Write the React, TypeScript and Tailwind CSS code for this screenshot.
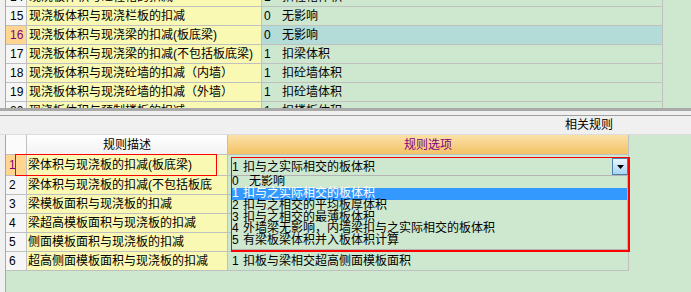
const FONT = "font-['Liberation_Sans','Noto_Sans_CJK_SC',sans-serif]";
const LINE = 'border-[#c0c0c0]';

type TopRow = { no: number; desc: string; val: string; opt: string; selected?: boolean };

const topRows: TopRow[] = [
  { no: 14, desc: '现浇板体积与砼柱帽的扣减', val: '1', opt: '扣柱帽体积' },
  { no: 15, desc: '现浇板体积与现浇栏板的扣减', val: '0', opt: '无影响' },
  { no: 16, desc: '现浇板体积与现浇梁的扣减(板底梁)', val: '0', opt: '无影响', selected: true },
  { no: 17, desc: '现浇板体积与现浇梁的扣减(不包括板底梁)', val: '1', opt: '扣梁体积' },
  { no: 18, desc: '现浇板体积与现浇砼墙的扣减（内墙）', val: '1', opt: '扣砼墙体积' },
  { no: 19, desc: '现浇板体积与现浇砼墙的扣减（外墙）', val: '1', opt: '扣砼墙体积' },
  { no: 20, desc: '现浇板体积与预制楼板的扣减', val: '1', opt: '扣楼板体积' },
];

type BottomRow = { no: number; desc: string; val?: string; opt?: string };

const bottomRows: BottomRow[] = [
  { no: 2, desc: '梁体积与现浇板的扣减(不包括板底' },
  { no: 3, desc: '梁模板面积与现浇板的扣减' },
  { no: 4, desc: '梁超高模板面积与现浇板的扣减' },
  { no: 5, desc: '侧面模板面积与现浇板的扣减' },
  { no: 6, desc: '超高侧面模板面积与现浇板的扣减', val: '1', opt: '扣板与梁相交超高侧面模板面积' },
];

// 下拉列表的选项
const options = [
  { val: '0', label: '无影响' },
  { val: '1', label: '扣与之实际相交的板体积' },
  { val: '2', label: '扣与之相交的平均板厚体积' },
  { val: '3', label: '扣与之相交的最薄板体积' },
  { val: '4', label: '外墙梁无影响，内墙梁扣与之实际相交的板体积' },
  { val: '5', label: '有梁板梁体积并入板体积计算' },
];

function Strip() {
  return <div className="w-[6px] shrink-0 bg-[#f0f0f0] border-r border-[#a8a8a8]" />;
}

function TopGridRow({ row, first }: { row: TopRow; first?: boolean }) {
  return (
    <div className={`flex h-[19px] shrink-0 ${first ? 'mt-[-12px]' : ''}`}>
      <Strip />
      <div
        className={`w-[21px] shrink-0 flex items-center pl-[4px] border-r border-b ${LINE} ${
          row.selected ? 'bg-[#ffd590] text-[#800080]' : 'bg-[#f6f6f6]'
        }`}
      >
        {row.no}
      </div>
      <div className={`w-[235px] shrink-0 flex items-center pl-[2px] whitespace-nowrap overflow-hidden border-r border-b ${LINE} bg-[#f9f9b4]`}>
        {row.desc}
      </div>
      <div
        className={`w-[401px] shrink-0 flex items-center pl-[2px] whitespace-nowrap border-r border-b ${LINE} ${
          row.selected ? 'bg-[#b3dcd8]' : 'bg-[#cde8cf]'
        }`}
      >
        <span className="w-[18px] shrink-0">{row.val}</span>
        {row.opt}
      </div>
      <div className="flex-1" />
    </div>
  );
}

function BottomGridRow({ row }: { row: BottomRow }) {
  return (
    <div className="flex h-[19px] shrink-0">
      <Strip />
      <div className={`w-[21px] shrink-0 flex items-center pl-[3px] border-r border-b ${LINE} bg-[#f6f6f6]`}>
        {row.no}
      </div>
      <div className={`w-[201px] shrink-0 flex items-center pl-[1px] whitespace-nowrap overflow-hidden border-r border-b ${LINE} bg-[#f9f9b4]`}>
        {row.desc}
      </div>
      <div className={`w-[401px] shrink-0 flex items-center pl-[4px] whitespace-nowrap border-r border-b ${LINE} bg-[#cde8cf]`}>
        {row.val && <span className="w-[11px] shrink-0">{row.val}</span>}
        {row.opt}
      </div>
      <div className="flex-1" />
    </div>
  );
}

function RuleDropdown() {
  return (
    <div className="absolute left-[231px] top-[157px] w-[399px] h-[95px] flex flex-col border-l border-t border-r-2 border-b-2 border-[#ff0000]">
      <div className="relative h-[17px] shrink-0 flex items-center bg-[#cde8cf] whitespace-nowrap">
        <span className="w-[11px] shrink-0">1</span>
        扣与之实际相交的板体积
        <div className="absolute right-0 top-0 w-[16px] h-[17px] flex items-center justify-center border border-[#4a80ad] bg-gradient-to-b from-[#eaf5fd] to-[#a9d5f3]">
          <svg width="7" height="4" viewBox="0 0 7 4">
            <path d="M0 0h7L3.5 4z" fill="#000" />
          </svg>
        </div>
      </div>
      <div className="flex-1 flex flex-col border-t border-b border-r border-[#b4b4b4] bg-[#cde8cf] leading-[11.5px]">
        {options.map((o) => (
          <div
            key={o.val}
            className={`flex items-center whitespace-nowrap ${
              o.val === '0' || o.val === '1' ? 'h-[12px]' : 'h-[11.5px]'
            } ${o.val === '1' ? 'bg-[#3399ff] text-white' : ''}`}
          >
            <span className={`${o.val === '0' ? 'w-[17px]' : 'w-[11px]'} shrink-0`}>{o.val}</span>
            {o.label}
          </div>
        ))}
      </div>
    </div>
  );
}

export default function App() {
  return (
    <div className={`relative w-[691px] h-[292px] overflow-hidden bg-[#cde8cf] text-[12px] leading-none text-black ${FONT}`}>
      <div className="h-[108px] overflow-hidden flex flex-col">
        {topRows.map((r, i) => (
          <TopGridRow key={r.no} row={r} first={i === 0} />
        ))}
      </div>

      <div className="h-[3px] bg-[#a9a9a9]" />
      <div className="h-[4px] bg-[#f0f0f0]" />
      <div className="h-[1px] bg-[#a0a0a0]" />
      <div className="h-[19px] flex items-center justify-end pr-[78px] bg-[#f0f0f0] border-b border-[#dcdcdc]">
        相关规则
      </div>

      <div className="flex flex-col h-[157px]">
        <div className="flex h-[20px] shrink-0">
          <Strip />
          <div className={`w-[21px] shrink-0 border-r border-b ${LINE} bg-[#fbfbfb]`} />
          <div className={`w-[201px] shrink-0 flex items-center justify-center border-r border-b ${LINE} bg-gradient-to-b from-[#ffffff] to-[#f2f2f2]`}>
            规则描述
          </div>
          <div className={`w-[401px] shrink-0 flex items-center justify-center text-[#800080] border-r border-b ${LINE} bg-gradient-to-b from-[#fbe1a8] to-[#f3c263]`}>
            规则选项
          </div>
          <div className="flex-1" />
        </div>

        <div className="flex h-[21px] shrink-0">
          <Strip />
          <div className={`w-[21px] shrink-0 flex items-center pl-[3px] text-[#800080] border-r border-b ${LINE} bg-[#ffd590]`}>
            1
          </div>
          <div className={`w-[201px] shrink-0 flex items-center pl-[1px] whitespace-nowrap border-r border-b ${LINE} bg-[#f9f9b4]`}>
            梁体积与现浇板的扣减(板底梁)
          </div>
          <div className={`w-[401px] shrink-0 border-r border-b ${LINE} bg-[#cde8cf]`} />
          <div className="flex-1" />
        </div>

        {bottomRows.map((r) => (
          <BottomGridRow key={r.no} row={r} />
        ))}

        <div className="flex flex-1">
          <Strip />
          <div className="flex-1" />
        </div>
      </div>

      <div className="absolute left-[15px] top-[154px] w-[202px] h-[22px] border border-[#ff0000]" />
      <RuleDropdown />
    </div>
  );
}
